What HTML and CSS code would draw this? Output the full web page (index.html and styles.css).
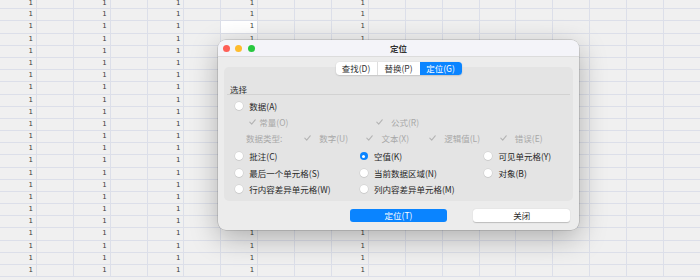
FILE: index.html
```html
<!DOCTYPE html>
<html lang="zh-CN">
<head>
    <meta charset="UTF-8">
    <title>定位</title>
    <link rel="stylesheet" href="styles.css">
</head>
<body>
    <div class="sheet" id="sheet"></div>

    <div class="dialog">
        <div class="titlebar">
            <div class="lights">
                <span class="light red"></span>
                <span class="light yellow"></span>
                <span class="light green"></span>
            </div>
            <div class="title">定位</div>
            <div></div>
        </div>
        <div class="dialog-body">
            <div class="tabs">
                <div class="tab">查找(D)</div>
                <div class="tab">替换(P)</div>
                <div class="tab active">定位(G)</div>
            </div>
            <div class="panel">
                <div class="panel-head">选择</div>

                <div class="row r1 radios">
                    <label class="opt"><span class="radio"></span>数据(A)</label>
                </div>

                <div class="row r2 checks">
                    <span class="chk-item w127 near"><svg class="tick" viewBox="0 0 7 6"><polyline points="0.8,3.2 2.7,5.1 6.2,0.8"/></svg>常量(O)</span>
                    <span class="chk-item wide-gap"><svg class="tick" viewBox="0 0 7 6"><polyline points="0.8,3.2 2.7,5.1 6.2,0.8"/></svg>公式(R)</span>
                </div>

                <div class="row r3 checks types">
                    <span class="type-label">数据类型:</span>
                    <span class="chk-item w62"><svg class="tick" viewBox="0 0 7 6"><polyline points="0.8,3.2 2.7,5.1 6.2,0.8"/></svg>数字(U)</span>
                    <span class="chk-item w63"><svg class="tick" viewBox="0 0 7 6"><polyline points="0.8,3.2 2.7,5.1 6.2,0.8"/></svg>文本(X)</span>
                    <span class="chk-item w71"><svg class="tick" viewBox="0 0 7 6"><polyline points="0.8,3.2 2.7,5.1 6.2,0.8"/></svg>逻辑值(L)</span>
                    <span class="chk-item"><svg class="tick" viewBox="0 0 7 6"><polyline points="0.8,3.2 2.7,5.1 6.2,0.8"/></svg>错误(E)</span>
                </div>

                <div class="row r4 radios">
                    <label class="opt"><span class="radio"></span>批注(C)</label>
                    <label class="opt"><span class="radio on"></span>空值(K)</label>
                    <label class="opt"><span class="radio"></span>可见单元格(Y)</label>
                </div>

                <div class="row r5 radios">
                    <label class="opt"><span class="radio"></span>最后一个单元格(S)</label>
                    <label class="opt"><span class="radio"></span>当前数据区域(N)</label>
                    <label class="opt"><span class="radio"></span>对象(B)</label>
                </div>

                <div class="row r6 radios">
                    <label class="opt"><span class="radio"></span>行内容差异单元格(W)</label>
                    <label class="opt"><span class="radio"></span>列内容差异单元格(M)</label>
                </div>
            </div>

            <div class="actions">
                <button class="btn primary">定位(T)</button>
                <button class="btn secondary">关闭</button>
            </div>
        </div>
    </div>

    <script>
        // background spreadsheet, cells under the dialog stay empty
        const sheet = document.getElementById('sheet');
        const filledCols = [0, 2, 4, 6, 9];
        for (let r = 0; r < 23; r++) {
            for (let c = 0; c < 19; c++) {
                const cell = document.createElement('div');
                cell.className = 'cell';
                const hidden = (c === 6 || c === 9) && r >= 4 && r <= 18;
                if (filledCols.includes(c) && !hidden) cell.textContent = '1';
                if (r === 2 && c === 6) cell.classList.add('selected');
                sheet.appendChild(cell);
            }
        }
    </script>
</body>
</html>
```

FILE: styles.css
```css
body {
    margin: 0;
    width: 700px;
    height: 280px;
    overflow: hidden;
    background: #f0f0f0;
    position: relative;
    font-family: "Noto Sans CJK SC", "Noto Sans", sans-serif;
    font-size: 8.5px;
    color: #262626;
}
.sheet {
    display: grid;
    grid-template-columns: repeat(19, 36.9px);
    grid-template-rows: 9.3px;
    grid-auto-rows: 12.18px;
}
.cell {
    box-sizing: border-box;
    border-right: 1px solid #dcdfe9;
    border-bottom: 1px solid #dcdfe9;
    font-family: "DejaVu Sans", sans-serif;
    font-size: 7px;
    line-height: 11.5px;
    color: #3a3a3a;
    text-align: right;
    padding-right: 3px;
    overflow: hidden;
}
.cell:nth-child(-n+19) {
    line-height: 7px;
}
.cell.selected {
    background: #fff;
}

.dialog {
    position: absolute;
    left: 218px;
    top: 40px;
    width: 361px;
    height: 190px;
    border-radius: 8px;
    background: #ececec;
    overflow: hidden;
    box-shadow: 0 8px 28px rgba(0,0,0,0.28), 0 0 0 0.5px rgba(0,0,0,0.22);
}
.titlebar {
    height: 16px;
    display: grid;
    grid-template-columns: 1fr auto 1fr;
    align-items: center;
    background: #f4f4f9;
    border-bottom: 1px solid #dcdcdc;
}
.lights {
    display: flex;
    gap: 5.3px;
    padding-left: 5.2px;
}
.light {
    width: 7px;
    height: 7px;
    border-radius: 50%;
}
.red { background: #fe5f57; }
.yellow { background: #febc2e; }
.green { background: #28c840; }
.title {
    font-size: 8.5px;
    font-weight: 700;
    color: #333;
}

.dialog-body {
    padding: 4.5px 6px 0;
}
.tabs {
    position: relative;
    z-index: 1;
    display: flex;
    width: 126px;
    height: 13.5px;
    margin: 0 auto;
    border-radius: 3.5px;
    overflow: hidden;
    background: #fff;
    box-shadow: 0 0.5px 1.5px rgba(0,0,0,0.22);
}
.tab {
    width: 42px;
    text-align: center;
    line-height: 13.5px;
    color: #333;
}
.tab:first-child {
    border-right: 1px solid #dedede;
    box-sizing: border-box;
}
.tab.active {
    background: #0a84ff;
    color: #fff;
}
.panel {
    margin-top: -8px;
    height: 134px;
    box-sizing: border-box;
    background: #e4e4e4;
    border-radius: 5px;
}
.panel-head {
    margin: 0 3px 0 2.7px;
    padding: 17px 0 0 3.3px;
    line-height: 11px;
    height: 10px;
    border-bottom: 1px solid #d2d2d2;
    color: #2a2a2a;
}
.row {
    display: flex;
    align-items: center;
}
.r1 { height: 16px; margin-top: 3.3px; }
.r2 { height: 15px; }
.r3 { height: 18px; }
.r4 { height: 18px; }
.r5 { height: 15px; }
.r6 { height: 17px; }

.radios {
    padding-left: 11px;
}
.opt {
    display: flex;
    align-items: center;
    gap: 6.3px;
    width: 124.6px;
    flex: none;
    white-space: nowrap;
}
.radio {
    width: 8px;
    height: 8px;
    border-radius: 50%;
    background: #fff;
    box-shadow: 0 0 0 0.5px rgba(0,0,0,0.1), 0 0.5px 1px rgba(0,0,0,0.12);
    display: grid;
    place-items: center;
    flex: none;
}
.radio.on {
    background: #0a84ff;
    box-shadow: none;
}
.radio.on::after {
    content: "";
    width: 3px;
    height: 3px;
    border-radius: 50%;
    background: #fff;
}

.checks {
    color: #a8a8a8;
    padding-left: 24.5px;
}
.types {
    padding-left: 22px;
}
.type-label {
    width: 58.2px;
    flex: none;
}
.chk-item {
    display: flex;
    align-items: center;
    gap: 8px;
    flex: none;
    white-space: nowrap;
}
.chk-item.near { gap: 3.8px; }
.chk-item.wide-gap { gap: 8.5px; }
.w127 { width: 127px; }
.w62 { width: 62.3px; }
.w63 { width: 62.7px; }
.w71 { width: 70.6px; }
.tick {
    width: 7px;
    height: 6px;
    flex: none;
    fill: none;
    stroke: #b4b4b4;
    stroke-width: 1.1;
    stroke-linecap: round;
    stroke-linejoin: round;
}

.actions {
    display: flex;
    gap: 26.3px;
    margin-top: 7.5px;
    padding-left: 126px;
}
.btn {
    width: 97px;
    height: 13px;
    padding: 0;
    border: none;
    border-radius: 3px;
    font-family: "Noto Sans CJK SC", "Noto Sans", sans-serif;
    font-size: 8.5px;
    line-height: 13px;
    flex: none;
}
.primary {
    background: #0a84ff;
    color: #fff;
}
.secondary {
    background: #fff;
    color: #2a2a2a;
    box-shadow: 0 0.5px 1px rgba(0,0,0,0.2);
}
```
